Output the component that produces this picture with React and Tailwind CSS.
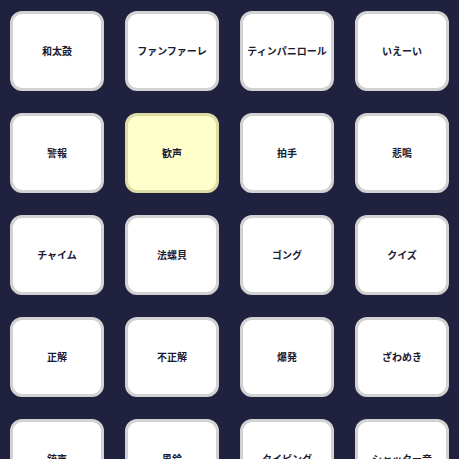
import React from "react";

const items = [
  "和太鼓", "ファンファーレ", "ティンパニロール", "いえーい",
  "警報", "歓声", "拍手", "悲鳴",
  "チャイム", "法螺貝", "ゴング", "クイズ",
  "正解", "不正解", "爆発", "ざわめき",
  "銃声", "風鈴", "タイピング", "シャッター音",
];

export default function App() {
  return (
    <div className="w-[459px] h-[459px] overflow-hidden bg-[#20203f]">
      <div className="grid grid-cols-4 gap-x-[21px] gap-y-[22px] pl-[10px] pr-[10px] pt-[11px]">
        {items.map((t) => (
          <div
            key={t}
            className={
              t === "歓声"
                ? "h-[80px] rounded-[12px] border-[3px] border-[#dcdca4] bg-[#ffffcc] flex items-center justify-center"
                : "h-[80px] rounded-[12px] border-[3px] border-[#d2d2d2] bg-white flex items-center justify-center"
            }
          >
            <span className="text-[10px] font-bold text-[#1a1a33] leading-none" style={{ fontFamily: '"Noto Sans CJK JP", "Noto Sans", sans-serif' }}>
              {t}
            </span>
          </div>
        ))}
      </div>
    </div>
  );
}
